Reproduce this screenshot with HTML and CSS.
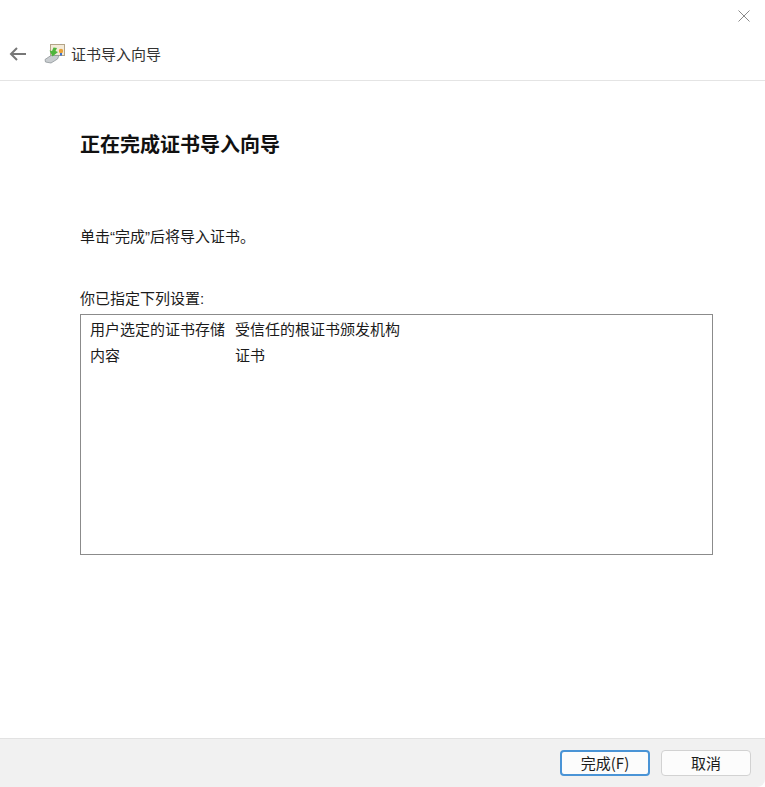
FILE: index.html
```html
<!DOCTYPE html>
<html lang="zh-CN">
<head>
<meta charset="utf-8">
<title>证书导入向导</title>
<link rel="stylesheet" href="styles.css">
</head>
<body>
<div class="window">
  <button class="close" aria-label="关闭">
    <svg width="14" height="14" viewBox="0 0 14 14"><path d="M1.500 1.500 12.500 12.500M12.500 1.500 1.500 12.500" stroke="#8a8a8a" stroke-width="1" fill="none"/></svg>
  </button>
  <header class="head">
    <svg class="back" width="18" height="14" viewBox="0 0 18 14"><path d="M17 7H2M8 1 2 7l6 6" stroke="#777" stroke-width="2" fill="none"/></svg>
    <svg class="cert" width="22" height="22" viewBox="0 0 22 22">
      <rect x="6.500" y="1.500" width="14" height="11" fill="#f3ead8" stroke="#b3a487"/>
      <path d="M1 16.500 7 12.500h8l-1.500 3.500L7 20 1.500 19z" fill="#c9cdd0" stroke="#8f9599" stroke-width=".8"/>
      <path d="M9.500 4.500 13 5 11.500 8 14 9 8.500 13.500 5.500 7.500 8 8z" fill="#4fb53c"/>
      <circle cx="17" cy="8" r="2.200" fill="#e8a23a"/>
      <path d="M16 10v3l1-.8 1 .8v-3z" fill="#3f73c9"/>
    </svg>
    <span class="head-title">证书导入向导</span>
  </header>
  <main class="content">
    <h1 class="title">正在完成证书导入向导</h1>
    <p class="intro">单击<span class="quote">“</span>完成<span class="quote">”</span>后将导入证书。</p>
    <p class="label">你已指定下列设置<span class="quote">:</span></p>
    <div class="list">
      <div class="row"><span class="key">用户选定的证书存储</span><span>受信任的根证书颁发机构</span></div>
      <div class="row"><span class="key">内容</span><span>证书</span></div>
    </div>
  </main>
  <footer class="foot">
    <button class="btn primary">完成(F)</button>
    <button class="btn">取消</button>
  </footer>
</div>
</body>
</html>
```
FILE: styles.css
```css
* { box-sizing: border-box; }
html, body { margin: 0; height: 100%; }
body {
  background: #fff;
  color: #1b1b1b;
  font-family: "Noto Sans CJK SC", "Liberation Sans", sans-serif;
  font-size: 15px;
  overflow: hidden;
}
.window {
  position: relative;
  width: 765px;
  height: 787px;
  display: flex;
  flex-direction: column;
}
.close {
  position: absolute;
  top: 9px;
  right: 14px;
  padding: 0;
  border: 0;
  background: none;
  line-height: 0;
}
.head {
  height: 81px;
  padding: 28px 0 0 9px;
  display: flex;
  align-items: center;
  border-bottom: 1px solid #e4e4e4;
}
.back { margin-right: 18px; }
.cert { margin-right: 5px; margin-left: -1px; }
.head-title { font-size: 15px; line-height: 20px; color: #333; }
.content {
  flex: 1;
  padding: 0 52px 0 80px;
  display: flex;
  flex-direction: column;
}
.title {
  margin: 49px 0 0;
  font-size: 20px;
  line-height: 28px;
  font-weight: 700;
  color: #111;
}
.quote { font-family: "Liberation Sans", sans-serif; }
.intro { margin: 68px 0 0; line-height: 20px; }
.label { margin: 41px 0 0; line-height: 20px; }
.list {
  margin-top: 5px;
  height: 241px;
  padding: 1px 9px;
  border: 1px solid #8b8b8b;
}
.row { display: flex; height: 26px; align-items: center; line-height: 20px; }
.key { width: 145px; }
.foot {
  height: 49px;
  background: #f1f1f1;
  border-top: 1px solid #e2e2e2;
  border-bottom-right-radius: 8px;
  padding: 11px 14px 0 0;
  display: flex;
  justify-content: flex-end;
  gap: 11px;
}
.btn {
  width: 90px;
  height: 26px;
  padding: 0;
  border: 1px solid #d2d2d2;
  border-radius: 4px;
  background: #fcfcfc;
  color: #1b1b1b;
  font: inherit;
  font-size: 15px;
  line-height: 20px;
}
.primary { border: 2px solid #4a94d6; }
```
